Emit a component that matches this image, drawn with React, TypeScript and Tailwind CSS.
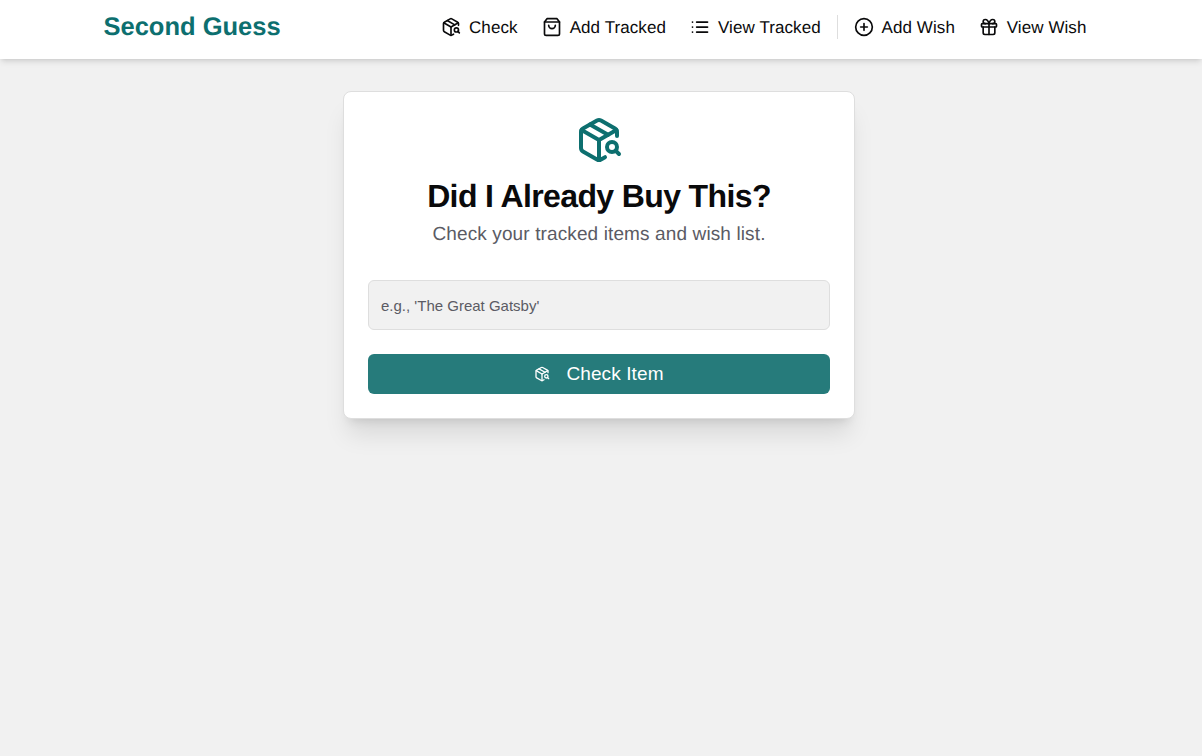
import React from "react";
import { PackageSearch, CirclePlus, Gift } from "lucide-react";

function BagIcon() {
  return (
    <svg className="size-5" viewBox="0 0 24 24" fill="none" stroke="currentColor" strokeWidth="2" strokeLinecap="round" strokeLinejoin="round">
      <path d="M6 2 3 6v14a2 2 0 0 0 2 2h14a2 2 0 0 0 2-2V6l-3-4Z" />
      <path d="M3 6h18" />
      <path d="M16 10a4 4 0 0 1-8 0" />
    </svg>
  );
}

function ListIcon() {
  return (
    <svg className="size-5" viewBox="0 0 24 24" fill="none" stroke="currentColor" strokeWidth="2.1" strokeLinecap="round" strokeLinejoin="round">
      <path d="M8 6h13M8 12h13M8 18h13M3 6h.01M3 12h.01M3 18h.01" />
    </svg>
  );
}

function NavItem({ icon, label, className = "gap-[7.5px]" }: { icon: React.ReactNode; label: string; className?: string }) {
  return (
    <a href="#" className={`flex h-10 items-center whitespace-nowrap text-[17px] leading-6 tracking-[0.085px] ${className}`}>
      {icon}
      <span className="pt-px">{label}</span>
    </a>
  );
}

export default function App() {
  return (
    <div className="min-h-screen bg-[#f1f1f1] font-['Liberation_Sans',Arial,sans-serif] text-[#0a0a0b] [text-rendering:geometricPrecision]">
      <header className="h-[59px] bg-white shadow-md">
        <div className="flex h-[54px] items-center justify-between pr-[115.5px] pl-[103.5px]">
          <a href="#" className="text-[25.5px] leading-8 font-bold text-[#0d6f6f]">Second Guess</a>
          <nav className="flex items-center">
            <NavItem className="gap-[7.7px]" icon={<PackageSearch size={20} />} label="Check" />
            <NavItem className="ml-[24.5px] gap-[7.5px]" icon={<BagIcon />} label="Add Tracked" />
            <NavItem className="ml-[24.2px] gap-[7.8px]" icon={<ListIcon />} label="View Tracked" />
            <div className="ml-[16.5px] h-6 w-px bg-[#dedede]" />
            <NavItem className="ml-4 gap-[7.3px]" icon={<CirclePlus size={20} />} label="Add Wish" />
            <NavItem className="ml-6 gap-[7.7px]" icon={<Gift size={20} />} label="View Wish" />
          </nav>
        </div>
      </header>
      <main className="flex justify-center pt-8 pr-1">
        <section className="flex h-[328px] w-[512px] flex-col rounded-lg border border-[#dedede] bg-white px-6 pt-6 shadow-xl">
          <PackageSearch size={48} className="mx-auto text-[#0d6f6f]" />
          <h1 className="mt-3 text-center text-[32px] leading-10 font-bold tracking-[-0.62px]">Did I Already Buy This?</h1>
          <p className="mt-[5px] text-center text-[19px] leading-7 tracking-[0.12px] text-[#5b5b64]">Check your tracked items and wish list.</p>
          <input className="mt-[31px] h-[50px] shrink-0 rounded-md border border-[#dedede] bg-[#f1f1f1] px-3 text-[15px] placeholder:text-[#5b5b64]" placeholder="e.g., 'The Great Gatsby'" />
          <button className="mt-6 flex h-10 shrink-0 items-center justify-center gap-4 rounded-md bg-[#267b7b] text-[19px] tracking-[0.11px] text-white">
            <PackageSearch size={16} />
            Check Item
          </button>
        </section>
      </main>
    </div>
  );
}
